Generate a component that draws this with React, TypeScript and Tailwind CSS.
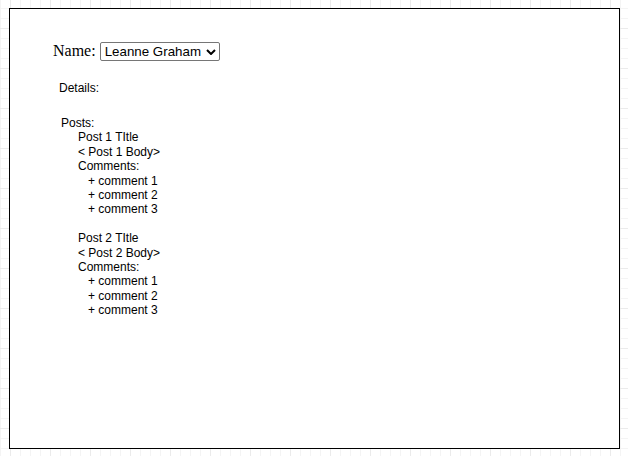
export default function App() {
  const posts = [1, 2];
  return (
    <div className="w-[628px] h-[456px] overflow-hidden bg-white [background-image:linear-gradient(to_right,#ebebeb_1px,transparent_1px),linear-gradient(to_bottom,#ebebeb_1px,transparent_1px),linear-gradient(to_right,#f4f4f4_1px,transparent_1px),linear-gradient(to_bottom,#f4f4f4_1px,transparent_1px)] [background-size:40px_40px,40px_40px,10px_10px,10px_10px] [background-position:10px_28px,10px_28px,0px_8px,0px_8px] pt-[8px] pl-[9px]">
      <div className="w-[611px] h-[441px] border border-black bg-white text-black font-['Liberation_Sans',Arial,sans-serif]">
        <div className="mt-[32px] pl-[43px] flex items-baseline">
          <span className="font-['Liberation_Serif','Times_New_Roman',serif] text-[16px] leading-[19px] whitespace-pre">Name: </span>
          <div className="relative inline-flex">
            <select
              defaultValue="Leanne Graham"
              className="appearance-none h-[19px] w-[120px] border border-[#767676] rounded-[2px] bg-white pl-[4px] pr-[18px] text-[13.33px] leading-[17px] text-black font-['Liberation_Sans',Arial,sans-serif] outline-none"
            >
              <option>Leanne Graham</option>
              <option>Ervin Howell</option>
              <option>Clementine Bauch</option>
            </select>
            <svg
              className="absolute right-[4px] top-[7px] pointer-events-none"
              width="10"
              height="6"
              viewBox="0 0 10 6"
            >
              <path d="M1 1 L5 5 L9 1" fill="none" stroke="#000" strokeWidth="2" />
            </svg>
          </div>
        </div>
        <div className="mt-[20px] pl-[49px] text-[12px] leading-[14.4px]">Details:</div>
        <div className="mt-[20.6px] pl-[51px] text-[12px] leading-[14.4px]">
          <div>Posts:</div>
          <div className="flex flex-col gap-[14.4px] pl-[17px]">
            {posts.map((n) => (
              <div key={n}>
                <div>Post {n} TItle</div>
                <div>{`< Post ${n} Body>`}</div>
                <div>Comments:</div>
                <div className="pl-[10px]">
                  <div>+ comment 1</div>
                  <div>+ comment 2</div>
                  <div>+ comment 3</div>
                </div>
              </div>
            ))}
          </div>
        </div>
      </div>
    </div>
  );
}
